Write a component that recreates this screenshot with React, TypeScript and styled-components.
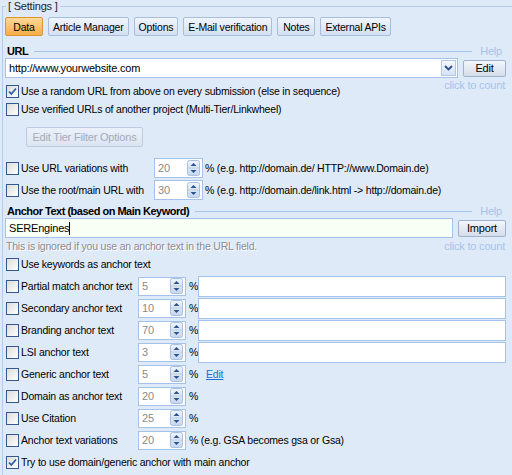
import styled, { createGlobalStyle } from 'styled-components';

const colourValues = {
  page: '#dfeaf9',
  frame: '#b4cbec',
  hint: '#a6c3ea',
  field: '#a5c3ea',
  text: '#000000',
  muted: '#8a8a8a',
  link: '#1b6fd6',
};

const GlobalStyle = createGlobalStyle`
  html, body {
    margin: 0;
    padding: 0;
    background: ${colourValues.page};
  }
  body {
    font-family: 'Liberation Sans', Arial, sans-serif;
    font-size: 10.5px;
    letter-spacing: -0.2px;
    color: ${colourValues.text};
    overflow: hidden;
  }
`;

const Panel = styled.fieldset`
  margin: 0 0 0 2px;
  padding: 0 6px 0 3px;
  height: 475px;
  box-sizing: border-box;
  border: none;
  border-top: 1px solid ${colourValues.frame};
  border-left: 1px solid ${colourValues.frame};
  min-width: 0;
`;

const Legend = styled.legend`
  padding: 0 2px;
  line-height: 13px;
  font-size: 11px;
  color: #222;
`;

const TabBar = styled.div`
  display: flex;
  gap: 5px;
  margin: 4px 0 0 -1px;
`;

const Tab = styled.div<{ $active?: boolean }>`
  height: 19px;
  min-width: 38px;
  box-sizing: border-box;
  padding: 0 4px;
  display: flex;
  align-items: center;
  justify-content: center;
  border-radius: 2px;
  border: 1px solid ${(p) => (p.$active ? '#de9230' : '#a9bedb')};
  background: ${(p) =>
    p.$active
      ? 'linear-gradient(#fdd998, #f6ad45)'
      : 'linear-gradient(#f0f5fc, #d3e0f2)'};
`;

const SectionHead = styled.div<{ $top: number }>`
  display: flex;
  align-items: center;
  height: 14px;
  margin-top: ${(p) => p.$top}px;
  padding-left: 1px;
`;

const Title = styled.span`
  font-weight: bold;
  font-size: 11px;
  letter-spacing: -0.5px;
`;

const Rule = styled.div`
  flex: 1;
  height: 1px;
  background: ${colourValues.hint};
  margin: 0 8px 0 6px;
`;

const Hint = styled.span`
  color: ${colourValues.hint};
  font-size: 11px;
  margin-right: 4px;
`;

const FieldRow = styled.div`
  display: flex;
  align-items: center;
  gap: 5px;
  margin-left: -1px;
`;

const Combo = styled.div`
  flex: 1;
  height: 20px;
  box-sizing: border-box;
  display: flex;
  align-items: center;
  padding-left: 3px;
  border: 1px solid ${colourValues.field};
  background: #fff;
  font-size: 11px;
`;

const TextInput = styled(Combo)<{ $tint?: boolean }>`
  background: ${(p) => (p.$tint ? '#f8fff4' : '#fff')};
`;

const Caret = styled.span`
  display: inline-block;
  width: 1px;
  height: 13px;
  background: #000;
`;

const DropButton = styled.div`
  margin-left: auto;
  margin-right: 1px;
  width: 15px;
  height: 16px;
  box-sizing: border-box;
  display: flex;
  align-items: center;
  justify-content: center;
  border: 1px solid #b3c8e6;
  background: linear-gradient(#f4f8fd, #d5e2f4);
`;

const Button = styled.div<{ $width: number }>`
  width: ${(p) => p.$width}px;
  height: 17px;
  box-sizing: border-box;
  display: flex;
  align-items: center;
  justify-content: center;
  border: 1px solid #9fb3cf;
  border-radius: 2px;
  background: linear-gradient(#f3f6fa, #d4dde9);
  font-size: 11px;
`;

const DisabledButton = styled(Button)`
  height: 20px;
  margin: 9px 0 0 20px;
  color: #a3acb8;
  border-color: #bccbe0;
  background: linear-gradient(#ebf1f9, #dbe5f2);
`;

const SplitRow = styled.div<{ $top: number }>`
  display: flex;
  justify-content: space-between;
  align-items: flex-start;
  margin-top: ${(p) => p.$top}px;
`;

const Column = styled.div<{ $pad?: number }>`
  display: flex;
  flex-direction: column;
  padding-top: ${(p) => p.$pad ?? 0}px;
`;

const Row = styled.div<{ $h: number }>`
  display: flex;
  align-items: center;
  height: ${(p) => p.$h}px;
  white-space: nowrap;
`;

const Box = styled.div`
  width: 13px;
  height: 13px;
  box-sizing: border-box;
  margin-right: 2px;
  flex: none;
  border: 1px solid #35598f;
  background: linear-gradient(135deg, #dcdcd8, #ffffff);
  display: flex;
  align-items: center;
  justify-content: center;
`;

const Label = styled.span<{ $width?: number }>`
  width: ${(p) => (p.$width ? `${p.$width}px` : 'auto')};
  flex: none;
`;

const Note = styled.span`
  color: #8c8c8c;
  text-shadow: 1px 1px 0 #fff;
  line-height: 13px;
`;

const Count = styled(Hint)`
  line-height: 13px;
  margin-right: 1px;
`;

const SpinBox = styled.div<{ $width: number; $height: number }>`
  width: ${(p) => p.$width}px;
  height: ${(p) => p.$height}px;
  flex: none;
  box-sizing: border-box;
  display: flex;
  align-items: center;
  justify-content: space-between;
  padding: 0 2px 0 3px;
  border: 1px solid ${colourValues.field};
  background: #fff;
  color: ${colourValues.muted};
  font-size: 11px;
`;

const Percent = styled.span`
  width: 12px;
  padding-left: 3px;
  box-sizing: border-box;
  flex: none;
`;

const Suffix = styled.span`
  margin-left: 2px;
`;

const RatioField = styled.div`
  flex: 1;
  height: 21px;
  box-sizing: border-box;
  border: 1px solid ${colourValues.field};
  background: #fff;
`;

const EditLink = styled.span`
  margin-left: 8px;
  color: ${colourValues.link};
  text-decoration: underline;
`;

const Check = ({ checked }: { checked?: boolean }) => (
  <Box>
    {checked && (
      <svg width="11" height="11" viewBox="0 0 11 11">
        <path d="M2 5.5 L4.3 8 L9 2.5" fill="none" stroke="#2c5ea6" strokeWidth="1.8" />
      </svg>
    )}
  </Box>
);

const SpinArrows = () => (
  <svg width="13" height="16" viewBox="0 0 13 16">
    <defs>
      <linearGradient id="spin" x1="0" y1="0" x2="0" y2="1">
        <stop offset="0" stopColor="#eef4fc" />
        <stop offset="1" stopColor="#c5d7ef" />
      </linearGradient>
    </defs>
    <rect x="0.5" y="0.5" width="12" height="15" rx="2" fill="url(#spin)" stroke="#a9c1e0" />
    <line x1="1" y1="8" x2="12" y2="8" stroke="#b9cde8" />
    <path d="M3.5 6 L6.5 3 L9.5 6 Z" fill="#2e5289" />
    <path d="M3.5 10 L6.5 13 L9.5 10 Z" fill="#2e5289" />
  </svg>
);

const Spin = ({ value, width, height }: { value: string; width: number; height: number }) => (
  <SpinBox $width={width} $height={height}>
    <span>{value}</span>
    <SpinArrows />
  </SpinBox>
);

type Ratio = { label: string; value: string; extra?: 'field' | 'edit' | string };

const ratios: Ratio[] = [
  { label: 'Partial match anchor text', value: '5', extra: 'field' },
  { label: 'Secondary anchor text', value: '10', extra: 'field' },
  { label: 'Branding anchor text', value: '70', extra: 'field' },
  { label: 'LSI anchor text', value: '3', extra: 'field' },
  { label: 'Generic anchor text', value: '5', extra: 'edit' },
  { label: 'Domain as anchor text', value: '20' },
  { label: 'Use Citation', value: '25' },
  { label: 'Anchor text variations', value: '20', extra: ' (e.g. GSA becomes gsa or Gsa)' },
];

const tabs = ['Data', 'Article Manager', 'Options', 'E-Mail verification', 'Notes', 'External APIs'];

const App = () => {
  return (
    <>
      <GlobalStyle />
      <Panel>
        <Legend>[ Settings ]</Legend>
        <TabBar>
          {tabs.map((t, i) => (
            <Tab key={t} $active={i === 0}>
              {t}
            </Tab>
          ))}
        </TabBar>

        <SectionHead $top={8}>
          <Title>URL</Title>
          <Rule />
          <Hint>Help</Hint>
        </SectionHead>
        <FieldRow>
          <Combo>
            <span>http://www.yourwebsite.com</span>
            <DropButton>
              <svg width="9" height="6" viewBox="0 0 9 6">
                <path d="M1 1 L4.5 4.5 L8 1" fill="none" stroke="#2b4f86" strokeWidth="1.8" />
              </svg>
            </DropButton>
          </Combo>
          <Button $width={43}>Edit</Button>
        </FieldRow>

        <SplitRow $top={1}>
          <Column $pad={3}>
            <Row $h={18}>
              <Check checked />
              <Label>Use a random URL from above on every submission (else in sequence)</Label>
            </Row>
            <Row $h={18}>
              <Check />
              <Label>Use verified URLs of another project (Multi-Tier/Linkwheel)</Label>
            </Row>
          </Column>
          <Count>click to count</Count>
        </SplitRow>

        <DisabledButton $width={117}>Edit Tier Filter Options</DisabledButton>

        <Column $pad={10}>
          <Row $h={22}>
            <Check />
            <Label $width={133}>Use URL variations with</Label>
            <Spin value="20" width={49} height={20} />
            <Suffix>% (e.g. http://domain.de/ HTTP://www.Domain.de)</Suffix>
          </Row>
          <Row $h={22}>
            <Check />
            <Label $width={133}>Use the root/main URL with</Label>
            <Spin value="30" width={49} height={20} />
            <Suffix>% (e.g. http://domain.de/link.html -&gt; http://domain.de)</Suffix>
          </Row>
        </Column>

        <SectionHead $top={3}>
          <Title>Anchor Text (based on Main Keyword)</Title>
          <Rule />
          <Hint>Help</Hint>
        </SectionHead>
        <FieldRow>
          <TextInput $tint>
            <span>SEREngines</span>
            <Caret />
          </TextInput>
          <Button $width={48}>Import</Button>
        </FieldRow>

        <SplitRow $top={2}>
          <Note>This is ignored if you use an anchor text in the URL field.</Note>
          <Count>click to count</Count>
        </SplitRow>

        <Column>
          <Row $h={22}>
            <Check />
            <Label>Use keywords as anchor text</Label>
          </Row>
          {ratios.map((r) => (
            <Row $h={22} key={r.label}>
              <Check />
              <Label $width={117}>{r.label}</Label>
              <Spin value={r.value} width={48} height={19} />
              <Percent>%{r.extra && r.extra !== 'field' && r.extra !== 'edit' ? r.extra : ''}</Percent>
              {r.extra === 'field' && <RatioField />}
              {r.extra === 'edit' && <EditLink>Edit</EditLink>}
            </Row>
          ))}
          <Row $h={22}>
            <Check checked />
            <Label>Try to use domain/generic anchor with main anchor</Label>
          </Row>
        </Column>
      </Panel>
    </>
  );
};

export default App;
